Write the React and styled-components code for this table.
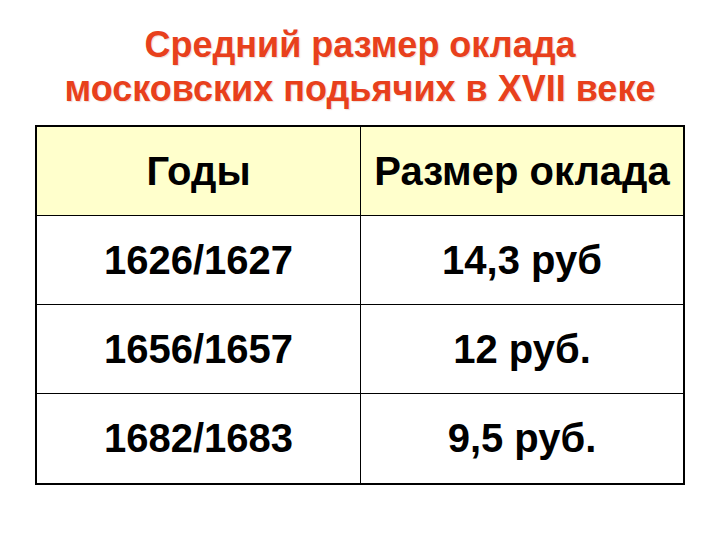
import React from "react";
import styled, { createGlobalStyle } from "styled-components";

const rows = [
  { years: "1626/1627", salary: "14,3 руб" },
  { years: "1656/1657", salary: "12 руб." },
  { years: "1682/1683", salary: "9,5 руб." },
];

const GlobalStyle = createGlobalStyle`
  body {
    margin: 0;
    background: #ffffff;
    font-family: "Liberation Sans", Arial, sans-serif;
  }
`;

const Slide = styled.div`
  width: 720px;
  height: 540px;
  padding-top: 23px;
  box-sizing: border-box;
  display: flex;
  flex-direction: column;
  align-items: center;
`;

const Title = styled.h1`
  margin: 0;
  font-size: 36px;
  line-height: 44px;
  font-weight: bold;
  color: #e8401c;
  text-align: center;
  text-shadow: 1px 1px 1px rgba(180, 120, 100, 0.25);
`;

const Table = styled.div`
  margin-top: 14px;
  width: 650px;
  box-sizing: border-box;
  border: 2px solid #000;
  display: grid;
  grid-template-columns: 324px 1fr;
  grid-auto-rows: 89px;
`;

const Cell = styled.div`
  display: flex;
  align-items: center;
  justify-content: center;
  font-size: 40px;
  font-weight: bold;
  color: #000;
  background: ${({ $head }) => ($head ? "#ffffcc" : "#ffffff")};
  border-right: ${({ $first }) => ($first ? "1px solid #000" : "none")};
  border-bottom: ${({ $last }) => ($last ? "none" : "1px solid #000")};
`;

export default function App() {
  return (
    <>
      <GlobalStyle />
      <Slide>
        <Title>
          Средний размер оклада
          <br />
          московских подьячих в XVII веке
        </Title>
        <Table>
          <Cell $head $first>Годы</Cell>
          <Cell $head>Размер оклада</Cell>
          {rows.map((row, index) => {
            const last = index === rows.length - 1;
            return (
              <React.Fragment key={row.years}>
                <Cell $first $last={last}>{row.years}</Cell>
                <Cell $last={last}>{row.salary}</Cell>
              </React.Fragment>
            );
          })}
        </Table>
      </Slide>
    </>
  );
}
